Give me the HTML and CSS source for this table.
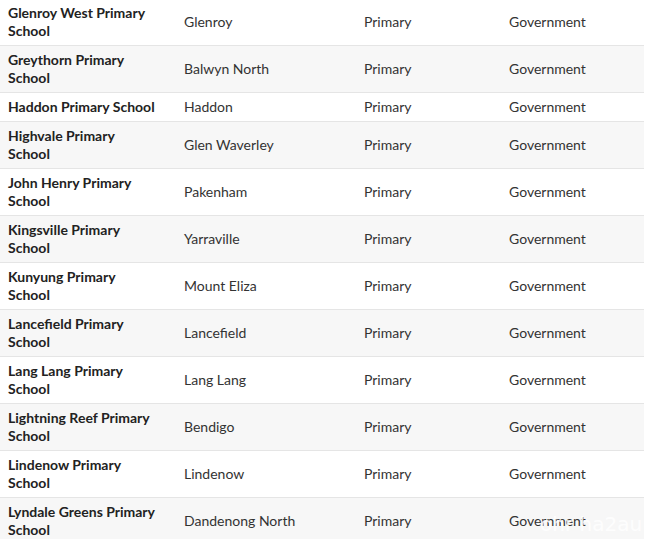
FILE: index.html
```html
<!DOCTYPE html>
<html>
<head>
<meta charset="utf-8">
<link rel="stylesheet" href="styles.css">
</head>
<body>
<div class="page">
<table class="schools">
<tbody>
<tr><td class="name">Glenroy West Primary School</td><td>Glenroy</td><td>Primary</td><td>Government</td></tr>
<tr><td class="name">Greythorn Primary School</td><td>Balwyn North</td><td>Primary</td><td>Government</td></tr>
<tr><td class="name">Haddon Primary School</td><td>Haddon</td><td>Primary</td><td>Government</td></tr>
<tr><td class="name">Highvale Primary School</td><td>Glen Waverley</td><td>Primary</td><td>Government</td></tr>
<tr><td class="name">John Henry Primary School</td><td>Pakenham</td><td>Primary</td><td>Government</td></tr>
<tr><td class="name">Kingsville Primary School</td><td>Yarraville</td><td>Primary</td><td>Government</td></tr>
<tr><td class="name">Kunyung Primary School</td><td>Mount Eliza</td><td>Primary</td><td>Government</td></tr>
<tr><td class="name">Lancefield Primary School</td><td>Lancefield</td><td>Primary</td><td>Government</td></tr>
<tr><td class="name">Lang Lang Primary School</td><td>Lang Lang</td><td>Primary</td><td>Government</td></tr>
<tr><td class="name">Lightning Reef Primary School</td><td>Bendigo</td><td>Primary</td><td>Government</td></tr>
<tr><td class="name">Lindenow Primary School</td><td>Lindenow</td><td>Primary</td><td>Government</td></tr>
<tr><td class="name">Lyndale Greens Primary School</td><td>Dandenong North</td><td>Primary</td><td>Government</td></tr>
</tbody>
</table>
<div class="watermark">ohr ha2au</div>
</div>
</body>
</html>
```

FILE: styles.css
```css
html, body {
  margin: 0;
  padding: 0;
  background: #ffffff;
  overflow: hidden;
}
.page {
  position: relative;
  width: 648px;
  height: 539px;
  overflow: hidden;
}
.schools {
  width: 644px;
  margin-top: -2px;
  border-collapse: collapse;
  table-layout: fixed;
  font-family: Lato, "Liberation Sans", sans-serif;
  font-size: 14px;
  line-height: 18px;
  color: #333333;
}
.schools td {
  border-top: 1px solid #e5e5e5;
  padding: 5px 8px;
  vertical-align: middle;
  text-align: left;
}
.schools td:nth-child(1) { width: 150px; padding-right: 18px; }
.schools td:nth-child(2) { width: 164px; }
.schools td:nth-child(3) { width: 129px; }
.schools td:nth-child(4) { width: 127px; }
.schools tr:nth-child(even) td { background: #f7f7f7; }
.schools td.name {
  font-weight: bold;
  color: #222222;
}
.watermark {
  position: absolute;
  left: 540px;
  top: 512px;
  font-family: "DejaVu Sans", sans-serif;
  font-size: 20px;
  line-height: 24px;
  color: rgba(255, 255, 255, 0.85);
  white-space: nowrap;
}
```
